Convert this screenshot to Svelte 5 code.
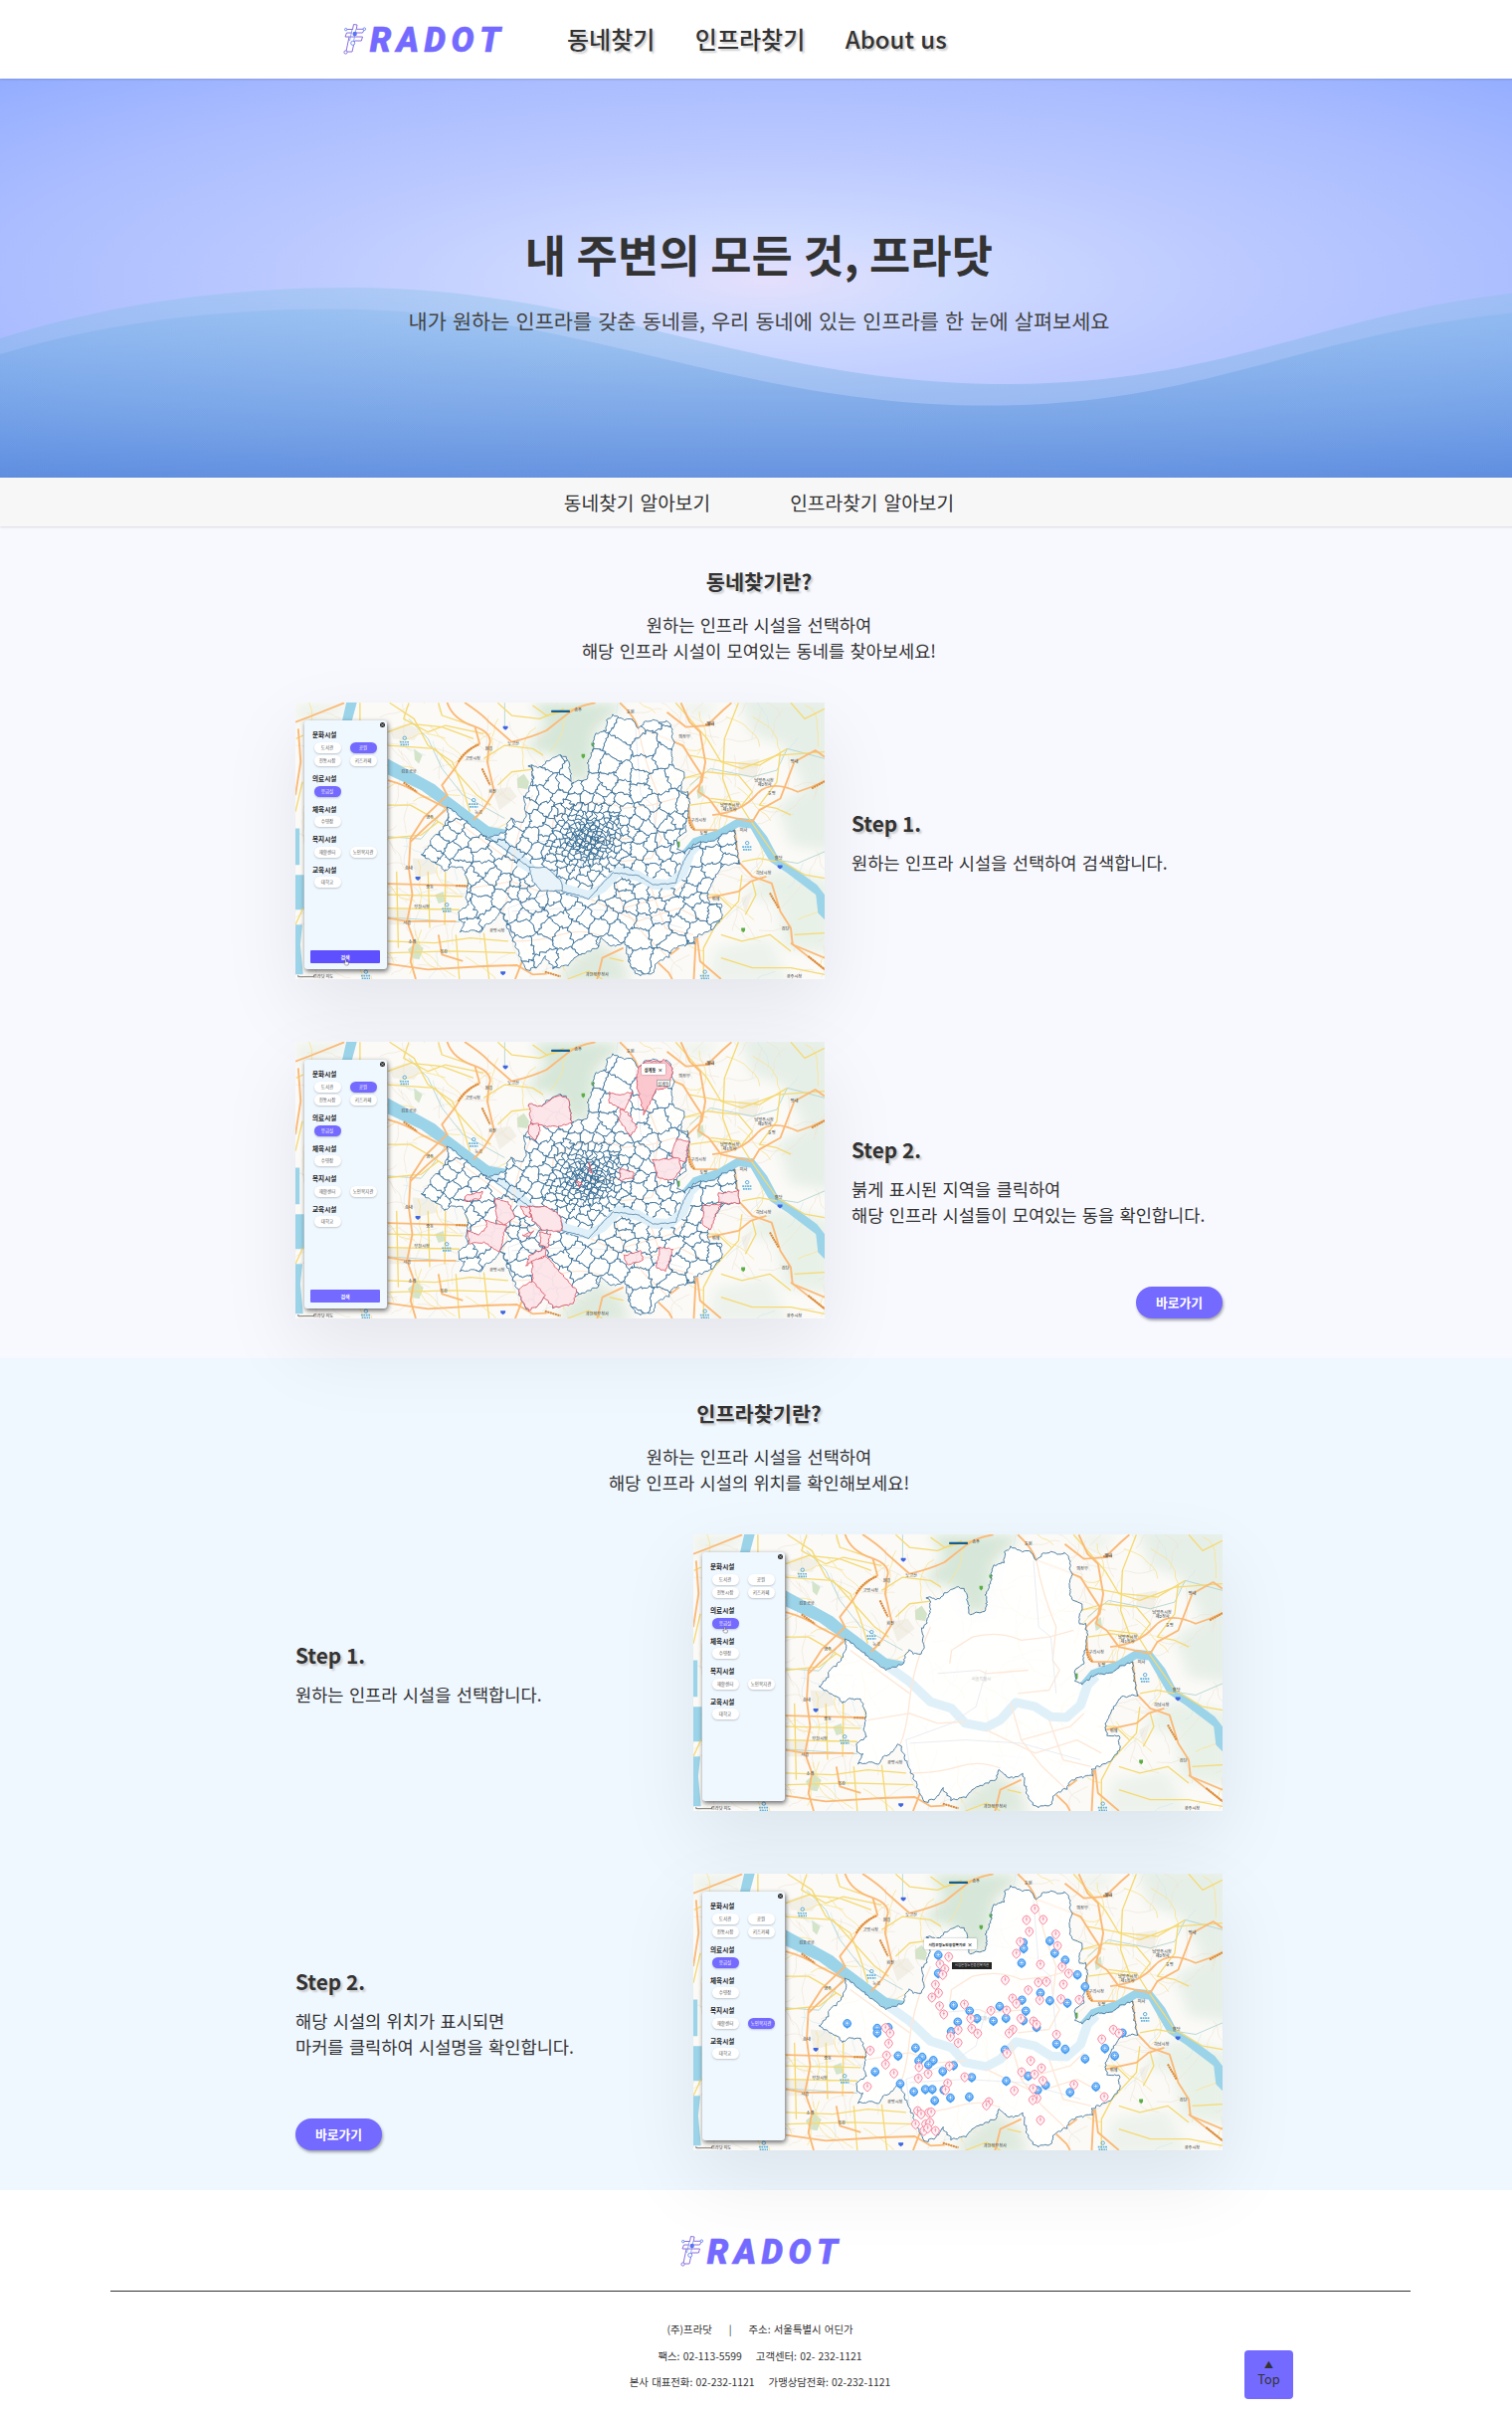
<script>
  // Map drawing units: x 20..1537, y 21..854.
  const seeded = (seed) => () => {
    seed = (seed * 1664525 + 1013904223) % 4294967296;
    return seed / 4294967296;
  };
  const parse = (s) => s.trim().split(/\s+/).map((p) => p.split(',').map(Number));

  // Continuous wobble, so edges shared by two shapes stay together.
  const wobble = ([x, y], a) => [
    x + a * (Math.sin(x * 0.31 + y * 0.17) + 0.8 * Math.sin(y * 0.53 - x * 0.23)),
    y + a * (Math.sin(y * 0.29 - x * 0.19) + 0.8 * Math.sin(x * 0.47 + y * 0.11))
  ];
  function rough(pts, a = 2, close = true) {
    const out = [];
    const n = close ? pts.length : pts.length - 1;
    for (let i = 0; i < n; i++) {
      const p = pts[i];
      const q = pts[(i + 1) % pts.length];
      const k = Math.max(1, Math.round(Math.hypot(q[0] - p[0], q[1] - p[1]) / 6));
      for (let j = 0; j < k; j++) {
        out.push(wobble([p[0] + ((q[0] - p[0]) * j) / k, p[1] + ((q[1] - p[1]) * j) / k], a));
      }
    }
    if (!close) out.push(pts[pts.length - 1]);
    return 'M' + out.map((p) => p[0].toFixed(1) + ',' + p[1].toFixed(1)).join('L') + (close ? 'Z' : '');
  }

  const cityPts = parse(`457,337 572,428 625,410 628,382 640,368 648,381 672,380 680,360 678,330 676,305 690,290 694,270
    699,240 700,222 690,212 728,215 745,195 775,180 795,186 803,200 808,230 812,262 830,258 855,253 862,235 858,205 868,185
    875,140 882,115 912,104 912,75 930,58 950,64 965,72 985,72 1002,98 1025,78 1045,74 1065,80 1085,78 1100,95 1098,120
    1104,140 1098,180 1105,220 1130,225 1136,245 1128,265 1124,288 1145,292 1150,330 1140,380 1138,410 1115,430 1114,465
    1135,472 1160,450 1185,440 1215,440 1245,418 1278,405 1285,460 1292,505 1245,510 1225,540 1200,590 1205,625 1240,630
    1242,665 1215,705 1180,720 1160,730 1165,745 1120,755 1100,765 1090,785 1055,805 1045,835 1005,842 980,815 970,770
    965,740 950,750 925,755 895,733 885,760 850,775 825,785 805,810 760,822 735,785 715,815 685,828 668,800 660,770
    645,740 635,715 612,655 607,655 585,680 560,695 555,712 530,708 492,712 505,682 487,675 490,650 515,630 508,600
    517,565 510,548 500,518 472,514 445,530 440,515 415,505 382,480 405,450 410,430 445,400 457,370`);
  const city = rough(cityPts, 2);

  function cells() {
    const rnd = seeded(77);
    const sites = [];
    const spacing = (x, y) => {
      const d = Math.hypot(x - 860, (y - 430) * 1.1);
      const e = Math.hypot(x - 668, y - 560);
      const f = Math.hypot(x - 930, y - 375);
      const g = Math.hypot((x - 820) * 2, y - 510);
      return Math.min(Math.max(8, d * 0.22), 13 + e * 0.5, 8 + f * 0.6, 11 + g * 0.45, y < 300 ? 78 : y > 680 ? 56 : 44);
    };
    for (let i = 0; i < 30000; i++) {
      const central = i % 3 === 0;
      const x = central ? 780 + rnd() * 190 : 370 + rnd() * 940;
      const y = central ? 340 + rnd() * 200 : 40 + rnd() * 810;
      const s = spacing(x, y) * (0.62 + rnd() * 0.9);
      if (sites.every((p) => Math.hypot(p[0] - x, p[1] - y) > Math.max(s, p[2] * 0.7))) sites.push([x, y, s]);
    }
    const paths = [];
    for (const a of sites) {
      let poly = [[a[0] - 110, a[1] - 110], [a[0] + 110, a[1] - 110], [a[0] + 110, a[1] + 110], [a[0] - 110, a[1] + 110]];
      for (const b of sites) {
        if (a === b || Math.abs(a[0] - b[0]) > 220 || Math.abs(a[1] - b[1]) > 220) continue;
        const mx = (a[0] + b[0]) / 2;
        const my = (a[1] + b[1]) / 2;
        const side = (p) => (p[0] - mx) * (b[0] - a[0]) + (p[1] - my) * (b[1] - a[1]);
        const next = [];
        for (let i = 0; i < poly.length; i++) {
          const p = poly[i];
          const q = poly[(i + 1) % poly.length];
          const sp = side(p);
          const sq = side(q);
          if (sp <= 0) next.push(p);
          if (sp <= 0 !== sq <= 0) {
            const t = sp / (sp - sq);
            next.push([p[0] + (q[0] - p[0]) * t, p[1] + (q[1] - p[1]) * t]);
          }
        }
        poly = next;
      }
      if (poly.length > 2) paths.push(rough(poly, 3));
    }
    return paths.join('');
  }
  const districts = cells();

  function lanes(seed, count, step) {
    const rnd = seeded(seed);
    let d = '';
    for (let i = 0; i < count; i++) {
      let x = 20 + rnd() * 1517;
      let y = 21 + rnd() * 833;
      let a = rnd() * 6.28;
      d += `M${x.toFixed(0)},${y.toFixed(0)}`;
      for (let j = 0; j < 7; j++) {
        a += (rnd() - 0.5) * 0.9;
        x += Math.cos(a) * step;
        y += Math.sin(a) * step;
        d += `L${x.toFixed(0)},${y.toFixed(0)}`;
      }
    }
    return d;
  }
  const paleLanes = lanes(5, 210, 14);
  const yellowLanes = lanes(19, 64, 20);
  const streams = lanes(41, 34, 13);

  const orange = [
    'M455,21 Q470,70 530,92 T575,150 L570,200 590,290 560,340 530,375',
    'M505,21 Q560,60 575,80 L640,140 Q700,125 740,105 L800,55 Q830,30 880,22',
    'M535,95 L548,145 Q500,170 480,215 L440,270 455,300 390,365 350,430 345,520 355,600 340,680 360,740 350,800 365,854',
    'M285,255 Q340,270 380,300 L455,340 400,390 350,440',
    'M950,22 Q990,60 1003,98 L1060,120 1130,150 1160,200 1185,240 1175,290 1205,310 1240,360 1330,380',
    'M1085,50 L1140,95 1200,90 1245,45 1270,22',
    'M1125,22 L1150,80 1180,110 1195,200 1185,260 1145,300 1150,370 1165,405 1230,405',
    'M1215,360 Q1300,350 1340,300 T1460,290 L1500,275 1537,258',
    'M1330,380 L1350,345 1410,310 1450,200 1510,165 1537,185',
    'M1280,405 L1290,500 1330,545 1385,565 1410,650 1440,700 1445,750 1537,790',
    'M1200,610 L1290,590 1325,560 1370,545 M1440,745 L1537,825',
    'M285,567 L480,572 515,575 M285,808 L400,825 560,815 655,812 700,840 740,838',
    'M285,670 L340,680 480,680 M430,720 L440,780 500,800 M1168,730 L1162,854 M1172,730 L1180,800 1240,854',
    'M20,300 L35,200 28,100 M20,80 L70,60 160,22',
    'M1060,805 L1090,835 1100,854 M1120,760 L1095,780 M670,800 L650,854 M885,854 L900,790 960,760'
  ];
  const yellow = [
    'M205,22 L205,75 M285,110 L350,85 440,95 530,130 M285,150 L420,160 480,230 540,300 580,330',
    'M290,22 L360,70 400,150 470,200 500,280 520,350 M285,330 L350,330 400,360 460,400',
    'M345,22 L330,70 400,110 450,90 560,115 M600,22 L640,60 720,70 790,40 M560,190 L620,150 700,160 730,180',
    'M600,270 L640,230 700,222 M285,430 L380,420 430,380 M285,600 L500,605 M285,640 L490,645 M400,530 L405,700 M450,530 L448,690',
    'M310,530 L315,760 M285,740 L420,745 520,730 630,740 M480,720 L490,854 M560,715 L575,854 M290,775 L470,770 650,775',
    'M1110,22 L1200,130 1240,200 1300,220 1400,180 1537,170 M1290,22 L1250,130 1245,250 1280,350',
    'M1150,180 L1250,200 1350,210 1430,160 M1210,310 L1290,320 1320,370 1400,490 1480,540 1537,550',
    'M1130,250 L1200,230 1290,240 1330,290 1300,330 M1150,330 L1220,320 1280,330 M1300,500 L1350,490 1400,500',
    'M1300,540 L1290,620 1220,700 1190,760 1190,854 M1240,720 L1300,740 1380,720 1440,770 M1330,560 L1340,600 1310,660',
    'M1240,790 L1330,820 1440,820 1537,840 M1180,600 L1230,600 1270,640 M1410,170 L1400,260 1350,330 1400,340 1440,360',
    'M20,350 L40,260 M22,130 L42,120 M20,690 L42,640 M800,854 L860,830 900,854 M920,790 L960,800 M1440,22 L1480,70 1537,40',
    'M1537,715 L1450,720 M700,30 L740,60 840,35 M430,22 L440,60 530,92'
  ];
  const inner = [
    'M700,300 Q650,420 640,520 T610,660 M755,410 L760,370 820,330 Q900,310 960,340 L1040,330 1110,310',
    'M1003,98 Q1020,200 1060,300 L1050,400 1070,430 1040,490 950,500 M640,740 Q720,740 780,720 T900,725',
    'M840,430 L860,440 980,430 M520,580 L640,560 720,590 800,585 M930,530 L960,640 1020,720 1090,790',
    'M960,640 L1100,600 1140,560 M1040,580 L1080,700 1160,720 M470,370 L640,500 M860,610 L1000,680 1120,640 1190,680'
  ];

  const redZones = [
    '690,208 728,215 750,195 775,182 803,195 812,265 770,277 712,272 695,262',
    '690,268 718,268 720,290 708,316 688,300',
    '920,172 945,182 985,172 965,225 920,205',
    '950,225 970,232 1000,280 980,305 950,260',
    '1112,315 1148,320 1138,380 1120,378 1098,365',
    '1045,378 1120,370 1125,405 1100,437 1060,432',
    '950,405 990,412 985,430 950,438',
    '1233,478 1290,470 1292,508 1233,505',
    '1190,515 1240,510 1222,545 1210,590 1187,570',
    '505,485 555,472 550,492 505,502',
    '593,495 630,502 650,550 618,572 597,560',
    '565,560 625,575 605,655 560,625 518,628 513,590 545,600 570,580',
    '690,517 740,518 770,535 783,560 782,592 730,588 700,560',
    '665,518 690,517 695,548 680,545',
    '670,605 705,590 690,605',
    '722,593 750,600 745,640 722,630',
    '690,665 740,640 735,665 680,695',
    '698,680 740,668 795,735 828,770 815,810 760,822 730,785 700,750',
    '660,765 700,740 735,785 715,815 690,830 668,800',
    '962,665 1012,650 1015,680 970,692',
    '1065,638 1102,648 1080,710 1055,700',
    '825,438 842,445 833,458',
    '861,385 869,415 865,415'
  ].map((z) => rough(parse(z), 1.6));
  const hotZone = rough(parse('1002,98 1030,78 1065,82 1075,75 1100,95 1098,130 1085,160 1055,165 1040,200 1020,240 1010,200 998,150'), 1.6);

  const bluePins = parse(`1042,227 966,232 967,250 1056,264 1086,285 961,294 722,270 722,325 1121,329 1143,365 1015,384
    1042,407 962,405 1092,414 766,421 898,424 812,438 973,438 833,461 880,468 916,460 778,471 759,500 966,467 1004,487
    1061,537 1086,553 1250,504 1200,551 1228,573 1143,582 461,476 547,490 547,504 579,488 657,549 607,573 676,577 666,588
    708,587 694,600 766,602 735,620 541,621 818,638 613,657 652,681 685,674 705,674 738,676 712,708 757,700 811,697
    917,649 980,634 1030,661 1007,677 1100,683 1174,666 913,555`);
  const pinkPins = parse(`999,130 975,163 1023,162 983,198 1059,206 957,229 1064,241 946,264 1015,297 1077,304 1096,324
    752,274 727,296 741,311 735,328 714,358 723,383 704,396 914,344 1009,351 1032,349 1081,357 980,374 935,399 1013,404
    1074,401 946,415 1126,403 797,417 726,422 738,447 873,436 918,435 815,460 959,460 995,468 1004,478 818,490 779,494
    835,505 757,514 779,533 936,493 925,504 1061,508 1224,493 1240,504 1191,522 919,565 571,488 584,504 580,535 527,556
    574,571 571,598 595,625 519,665 667,606 665,640 693,626 754,603 798,636 749,655 743,675 987,587 1018,609 961,621
    998,628 1022,647 994,671 940,677 1005,700 993,705 1111,659 1198,696 867,711 860,721 1015,766 663,738 673,748 695,743
    702,742 657,778 686,778 698,773 681,798 714,798 692,790`);

  const labels = [
    [528, 195, '고양시청'], [382, 642, '부천시청'], [598, 713, '광명시청'], [1175, 382, '구리시청'],
    [1363, 260, '남양주시청'], [1365, 273, '제2청사'], [1265, 336, '남양주시청'], [1265, 349, '제1청사'],
    [1362, 540, '하남시청'], [885, 846, '과천정부청사'], [1450, 852, '광주시청'], [345, 235, '김포공항'],
    [645, 150, '노고산'], [575, 165, '원흥'], [1135, 128, '의정부'], [1450, 205, '평내'], [405, 372, '행주'],
    [545, 356, '능곡'], [585, 295, '화전'], [345, 525, '송내'], [405, 580, '중동'], [340, 690, '시흥'],
    [355, 745, '소래'], [445, 775, '목감'], [1225, 618, '위례'], [1425, 708, '검단'], [1405, 495, '팔당'],
    [1385, 300, '호평'], [1210, 90, '별내'], [980, 55, '호원'], [830, 48, '송추'], [1190, 420, '토평'], [1305, 412, '미사']
  ];
  const blueMarks = [[333, 128], [531, 315], [454, 630], [1315, 444], [1194, 832], [222, 832]];

  const groups = [
    ['문화시설', ['도서관', '공원', '전통시장', '키즈카페']],
    ['의료시설', ['응급실']],
    ['체육시설', ['수영장']],
    ['복지시설', ['재활센터', '노인복지관']],
    ['교육시설', ['대학교']]
  ];
  const active = {
    search: ['공원', '응급실'],
    result: ['공원', '응급실'],
    select: ['응급실'],
    pins: ['응급실', '노인복지관']
  };
</script>

{#snippet logo()}
  <svg class="logo" viewBox="0 0 160 32" role="img" aria-label="FRADOT">
    <g fill="none" stroke="#8d6fdc" stroke-width="1">
      <path d="M8.500 6.500 9.500 1.500 13 2 12.300 6.300H19.500M20 7 18.500 10H11.500M2 6.500H9M8 10H2.500L1 14H18.500L17.300 18H10.500L8 29H2.500M5 14 2 28.500" />
      <path d="M8 6.500 5.500 18M12 6 9.500 18.500" stroke="#7b93ee" stroke-width=".8" />
      <circle cx="1.500" cy="29.500" r="1.600" fill="#fff" />
      <circle cx="8.700" cy="20.300" r="2" fill="#fff" stroke="#6f8df5" />
      <circle cx="20.300" cy="6.200" r="1.300" fill="#fff" stroke="#6f8df5" />
      <circle cx="1.700" cy="6.600" r="1.200" fill="#fff" stroke="#6f8df5" />
      <circle cx="10.700" cy="11" r="2.200" fill="#5b72f4" stroke="none" />
    </g>
    <text x="25.800 52.500 80.500 107.500 136" y="28.800">RADOT</text>
  </svg>
{/snippet}

{#snippet map(kind)}
  <div class="map">
    <svg class="canvas" viewBox="20 21 1517 833" preserveAspectRatio="none">
      <defs>
        <clipPath id="city-{kind}"><path d={city} /></clipPath>
        <filter id="soft-{kind}"><feGaussianBlur stdDeviation="18" /></filter>
      </defs>
      <rect x="20" y="21" width="1517" height="833" fill="#fbfaf7" />
      <g filter="url(#soft-{kind})">
        <path d="M1290,0H1560V470L1440,450 1400,330 1480,280 1420,150 1330,120Z" fill="#e6efe7" />
        <path d="M1300,600 1400,620 1420,760 1560,780V560L1440,530 1400,520Z" fill="#e8f1e8" />
        <path d="M700,21H960L880,110 860,260 800,250 770,180 680,160 740,90Z" fill="#d6e7d9" />
        <path d="M780,830 880,740 960,790 980,870H780Z" fill="#dfeadf" />
        <path d="M1220,760 1380,730 1440,870H1200Z" fill="#edf3ec" />
        <path d="M20,21H180L150,60 20,90ZM1100,21H1240L1180,80Z" fill="#eef3ec" />
      </g>
      <path d="M655,250l20-14 15 24-5 22-28-4zM342,765l25-22 20 18-12 34-20-4zM1170,285l18-15 4 30-18 12zM360,160l24 20-10 25-12-12zM420,600l24-10 6 30-20 6z" fill="#d3e4c8" />
      <path d="M290,100l50-15 40 20-20 30-60-5zM585,285l50-10 20 30-50 40zM355,490l60 5 10 40-60 15zM290,640h60v50h-60zM1290,200l60-10-10 60-50-10zM1330,590l-20 70-12-50z" fill="#f2efe6" />
      <path class="pale" d={paleLanes} />
      <path class="stream" d={streams} />
      <path class="thin" d={yellowLanes} />
      <path d="M166,21h30l-14,55h-28zM20,400h12v110h-12zM20,540h24v105h-24zM20,690h20l-6,60 8,90h-22z" fill="#9bd3e9" />
      <path d="M285,190 340,222 420,268 460,304 575,395 628,405 625,412 572,428 460,345 380,285 285,238Z" fill="#9bd3e9" />
      <path d="M1120,480 1160,430 1235,402 1290,368 1332,372 1372,425 1405,490 1450,520 1515,570 1537,600V675L1518,655 1512,600 1430,535 1380,500 1325,400 1290,396 1230,435 1165,455Z" fill="#9bd3e9" />
      <g class="waterway">
        <path d="M285,425 380,432 410,395 440,350 460,320M345,70 400,130 440,220 500,300 620,370M620,22V95M1150,270 1210,220 1330,245 1400,225 1430,160 1537,190M1400,495 1460,505 1537,470M285,668 490,682" />
      </g>
      {#each yellow as d}<path class="yellow" {d} />{/each}
      {#each orange as d}<path class="orange" {d} />{/each}
      <path class="brown" d="M487,200Q505,165 545,148M330,262 368,290M555,220 578,270M1148,365Q1148,395 1165,405M1380,595 1405,640M1490,785 1537,825M480,573 515,573M1500,280 1537,258M735,832 780,846M1195,88 1220,86" />
      {#each labels as [x, y, name]}<text class="place" {x} {y}>{name}</text>{/each}
      {#each blueMarks as [x, y]}
        <circle cx={x} cy={y} r="5" fill="none" stroke="#4aa3d6" stroke-width="2.500" />
        <path d="M{x - 14},{y + 12}h28M{x - 12},{y + 20}h24" stroke="#62b2dd" stroke-width="5" stroke-dasharray="5 2" />
      {/each}
      <path d="M615,92h14v6l-7,6-7-6zM364,545h14v6l-7,6-7-6zM1402,511h14v6l-7,6-7-6zM608,831h14v6l-7,6-7-6z" fill="#3f66e0" />
      <path d="M868,142h10v8l-5,6-5-6zM840,176h10v8l-5,6-5-6zM1298,700h11v8l-5,6-6-6zM1114,440h8v14l-4,5z" fill="#5cad45" />

      <path d={city} fill="#fff" fill-opacity=".84" />
      <g clip-path="url(#city-{kind})">
        <path class="river" d="M560,405 640,465 700,525 760,545 800,590 860,602 900,580 945,527 1000,540 1045,570 1090,572 1130,535 1150,475 1175,448" />
        {#each inner as d}<path class="inner" {d} />{/each}
        <path class="rail" d="M995,100 1010,300 1045,330 1060,500M640,720 630,640 760,590 830,540 860,430M720,440 840,430M640,650 800,640 960,650 1130,700" />
        {#if kind === 'search' || kind === 'result'}
          <path class="district" d={districts} />
          <path d="M690,517 740,518 783,560 785,588 725,588 700,560Z" fill="#e9f3fa" />
          <path class="river" d="M660,500 700,525 M790,580 860,602 900,580 945,530 1000,545 1045,565 1090,568 1130,535 1150,480" />
          <path class="district" d={rough(parse('575,428 640,480 690,517 740,518 783,560 785,588 860,612 930,533 1000,542 1045,570 1110,565 1132,500 1152,465'), 1, false)} />
          <path class="district" d={rough(parse('690,517 700,560 725,588 785,588'), 1, false)} />
        {:else}
          <text class="place faint" x="845" y="462">서울특별시</text>
        {/if}
      </g>
      <path class="border" d={city} />
      {#if kind === 'result'}
        {#each redZones as d}<path class="zone" {d} />{/each}
        <path class="zone hot" d={hotZone} />
      {/if}
      {#if kind === 'pins'}
        {#each bluePins as [x, y]}
          <path d="M{x},{y + 12}l-9,-7a12,13 0 1 1 18,0z" fill="#459cf3" />
          <circle cx={x} cy={y - 5} r="7.500" fill="#4c9ff2" stroke="#d6eaff" stroke-width="1.500" />
          <path d="M{x - 5},{y - 5}h10M{x},{y - 10}v10" stroke="#fff" stroke-width="2.200" />
        {/each}
        {#each pinkPins as [x, y]}
          <path d="M{x},{y + 12}l-8,-7a11,12 0 1 1 16,0z" fill="#fff3f5" stroke="#f57c98" stroke-width="2.600" />
          <path d="M{x},{y - 12}v13M{x - 3},{y - 5}h6" stroke="#f0829b" stroke-width="2" />
        {/each}
      {/if}
      <rect x="753" y="44" width="54" height="7" rx="2" fill="#155e91" />
      <path d="M28,842v5h45v-5" fill="none" stroke="#444" stroke-width="2" />
      <text class="place" x="100" y="850">프라닷 지도</text>
    </svg>

    <aside class="panel">
      <span class="close">×</span>
      {#each groups as [title, items]}
        <div class="group">
          <b>{title}</b>
          <div class="chips">
            {#each items as item}
              <span class="chip" class:on={active[kind].includes(item)}>{item}</span>
            {/each}
          </div>
        </div>
      {/each}
      {#if kind === 'search' || kind === 'result'}
        <span class="find" class:pressed={kind === 'search'}>검색</span>
      {/if}
    </aside>

    {#if kind === 'search' || kind === 'select'}
      <svg class="hand {kind}" viewBox="0 0 12 14"><path d="M4 1.500q1-1 2 0V6l4 1q1.300.500 1 2l-1 4H4.500L1 8.500q.500-1.300 1.800-.700L4 9z" fill="#fff" stroke="#555" /></svg>
    {/if}
    {#if kind === 'result'}
      <span class="bubble dong">상계동 <i>×</i></span>
      <span class="tip light">상계동</span>
    {/if}
    {#if kind === 'pins'}
      <span class="bubble center">시립은평노인종합복지관 <i>×</i></span>
      <span class="tip dark">시립은평노인종합복지관</span>
    {/if}
  </div>
{/snippet}

<div class="page">
  <header>
    {@render logo()}
    <nav><a href="#find">동네찾기</a><a href="#infra">인프라찾기</a><a href="#about">About us</a></nav>
  </header>

  <div class="hero">
    <svg class="waves" viewBox="0 0 1526 401" preserveAspectRatio="none">
      <defs>
        <linearGradient id="back" x1="0" y1="0" x2="0" y2="1">
          <stop offset="0" stop-color="#84c0e4" stop-opacity=".34" />
          <stop offset="1" stop-color="#5a96d7" stop-opacity=".42" />
        </linearGradient>
        <linearGradient id="front" x1="0" y1="0" x2="0" y2="1">
          <stop offset="0" stop-color="#70b2e6" stop-opacity=".24" />
          <stop offset="1" stop-color="#3770cd" stop-opacity=".42" />
        </linearGradient>
      </defs>
      <path fill="url(#back)" d="M0,261C120,223 240,210 354,210C600,210 760,307 1013,307C1230,307 1330,236 1526,215V401H0Z" />
      <path fill="url(#front)" d="M0,277C110,244 220,231.600 334,231.600C580,231.600 740,328.600 994,328.600C1210,328.600 1310,256 1526,235V401H0Z" />
    </svg>
    <h1>내 주변의 모든 것, 프라닷</h1>
    <p>내가 원하는 인프라를 갖춘 동네를, 우리 동네에 있는 인프라를 한 눈에 살펴보세요</p>
  </div>

  <div class="subnav"><a href="#find">동네찾기 알아보기</a><a href="#infra">인프라찾기 알아보기</a></div>

  <section class="find-area" id="find">
    <h2>동네찾기란?</h2>
    <p class="lead">원하는 인프라 시설을 선택하여<br />해당 인프라 시설이 모여있는 동네를 찾아보세요!</p>
    <div class="row">
      {@render map('search')}
      <div class="step first"><h3>Step 1.</h3><p>원하는 인프라 시설을 선택하여 검색합니다.</p></div>
    </div>
    <div class="row">
      {@render map('result')}
      <div class="step">
        <h3>Step 2.</h3>
        <p>붉게 표시된 지역을 클릭하여<br />해당 인프라 시설들이 모여있는 동을 확인합니다.</p>
        <button>바로가기</button>
      </div>
    </div>
  </section>

  <section class="infra-area" id="infra">
    <h2>인프라찾기란?</h2>
    <p class="lead">원하는 인프라 시설을 선택하여<br />해당 인프라 시설의 위치를 확인해보세요!</p>
    <div class="row flip">
      {@render map('select')}
      <div class="step first"><h3>Step 1.</h3><p>원하는 인프라 시설을 선택합니다.</p></div>
    </div>
    <div class="row flip">
      {@render map('pins')}
      <div class="step">
        <h3>Step 2.</h3>
        <p>해당 시설의 위치가 표시되면<br />마커를 클릭하여 시설명을 확인합니다.</p>
        <button>바로가기</button>
      </div>
    </div>
  </section>

  <footer>
    {@render logo()}
    <hr />
    <div class="info"><span>(주)프라닷</span><span class="bar">|</span><span>주소: 서울특별시 어딘가</span></div>
    <div class="info"><span>팩스: 02-113-5599</span><span>고객센터: 02- 232-1121</span></div>
    <div class="info"><span>본사 대표전화: 02-232-1121</span><span>가맹상담전화: 02-232-1121</span></div>
  </footer>
  <a class="top" href="#app"><span>▲</span>Top</a>
</div>

<style>
  :global(body) { overflow-x: hidden; }
  .page {
    position: relative;
    width: 1526px;
    height: 2426px;
    overflow: hidden;
    color: #333;
    background: #fff;
    font-family: 'Noto Sans CJK KR', 'Noto Sans', sans-serif;
  }
  .page * { box-sizing: border-box; }
  h1, h2, h3, p { margin: 0; }
  a { color: inherit; text-decoration: none; }

  header {
    position: relative;
    z-index: 2;
    display: flex;
    align-items: center;
    height: 79px;
    padding: 0 0 2px 346px;
    background: #fff;
    box-shadow: 0 1px 2px rgba(60, 70, 120, .25);
  }
  .logo { display: block; width: 160px; height: 32px; overflow: visible; }
  .logo text {
    font: italic 900 34.300px Roboto, sans-serif;
    fill: #746aff;
    stroke: #746aff;
    stroke-width: .5;
  }
  nav {
    display: flex;
    gap: 40.500px;
    margin-left: 64px;
    font-size: 24px;
    font-weight: 500;
    line-height: 35px;
    word-spacing: 1px;
    text-shadow: 2px 2px 2px #ccc;
  }

  .hero {
    position: relative;
    height: 401px;
    padding-top: 143px;
    text-align: center;
    background: radial-gradient(ellipse at 50.5% 50.5%, #e4dffc 0, #d0dbff 16%, #bccaff 42%, #abbdff 72%, #93adff 100%);
  }
  .waves { position: absolute; inset: 0; width: 100%; height: 100%; }
  .hero h1 { position: relative; font-size: 44.8px; line-height: 65px; font-weight: 700; letter-spacing: .2px; }
  .hero p { position: relative; margin-top: 20px; font-size: 20.8px; line-height: 30px; word-spacing: 1.500px; color: #444; }

  .subnav {
    position: relative;
    display: flex;
    justify-content: center;
    gap: 80px;
    height: 49px;
    padding-top: 11px;
    font-size: 19.2px;
    line-height: 28px;
    word-spacing: 1.800px;
    background: #f7f7f7;
    box-shadow: 0 1px 2px rgba(0, 0, 0, .12);
  }

  section { height: 836px; padding: 40px 297px 0; }
  .find-area { background: #f8f9ff; }
  .infra-area { background: #eff7ff; }
  h2 {
    font-size: 20.8px;
    line-height: 30px;
    text-align: center;
    text-shadow: 2px 2px 2px #ccc;
  }
  .lead { margin: 16px 0 39px; text-align: center; }
  .lead, .step p { font-size: 17.6px; line-height: 26px; word-spacing: 1.400px; }
  .row { display: flex; gap: 27px; height: 278px; margin-bottom: 63px; }
  .flip { flex-direction: row-reverse; }
  .step { flex: 1; display: flex; flex-direction: column; padding-top: 93px; }
  .step.first { padding-top: 106px; }
  h3 { font-size: 20.8px; line-height: 30px; text-shadow: 2px 2px 2px #ccc; }
  .step p { margin-top: 11.500px; white-space: nowrap; }
  button {
    align-self: flex-end;
    width: 87px;
    height: 32px;
    margin-top: auto;
    padding: 0;
    border: 0;
    border-radius: 16px;
    color: #fff;
    background: #746aff;
    box-shadow: 1px 2px 3px rgba(0, 0, 0, .35);
    font: 700 12.8px/32px 'Noto Sans CJK KR', sans-serif;
  }
  .flip button { align-self: flex-start; }

  .map {
    position: relative;
    flex: none;
    width: 532px;
    height: 278px;
    box-shadow: 0 30px 75px rgba(0, 0, 0, .08);
  }
  .canvas { display: block; width: 100%; height: 100%; }
  .canvas path { stroke-linejoin: round; }
  .pale, .stream, .thin, .yellow, .orange, .brown, .inner, .rail, .river, .district, .waterway { fill: none; }
  .pale { stroke: #ece2d0; stroke-width: 1.600; }
  .stream { stroke: #cfe6ef; stroke-width: 1.600; }
  .thin { stroke: #f8e497; stroke-width: 2.600; }
  .yellow { stroke: #f5d971; stroke-width: 3.800; }
  .orange { stroke: #fbb976; stroke-width: 5.400; }
  .brown { stroke: #d98a3a; stroke-width: 6; stroke-dasharray: 6 1.500; }
  .waterway { stroke: #a5cdc9; stroke-width: 2.200; }
  .inner { stroke: #fde8d8; stroke-width: 4; }
  .rail { stroke: #e6e9ef; stroke-width: 2.500; }
  .river { stroke: #e0f0f9; stroke-width: 27; }
  .district { stroke: #356c95; stroke-width: 2; }
  .border { fill: none; stroke: #3d7299; stroke-width: 2.600; }
  .zone { fill: #fde5e9; fill-opacity: .95; stroke: #dd5566; stroke-width: 2.600; }
  .hot { fill: #fbc5cc; }
  .place {
    font: 500 12px 'Noto Sans CJK KR', sans-serif;
    text-anchor: middle;
    fill: #555;
  }
  .faint { fill: #ccc; }

  .panel {
    position: absolute;
    top: 18px;
    left: 9px;
    width: 83px;
    height: 250px;
    padding: 8px 0 0 8px;
    border-radius: 3px;
    background: #eff7ff;
    box-shadow: 1px 2px 5px rgba(0, 0, 0, .6);
  }
  .group { margin-bottom: 6px; }
  .group b { display: block; margin-bottom: 1.500px; color: #222; font-size: 6.600px; line-height: 12px; }
  .chips { display: grid; grid-template-columns: 27px 27px; gap: 2.800px 9px; padding-left: 1.500px; }
  .chip {
    height: 11px;
    border-radius: 6px;
    background: #fff;
    box-shadow: 0 1px 2px rgba(0, 0, 0, .2);
    color: #555;
    font-size: 4.500px;
    line-height: 11px;
    text-align: center;
    white-space: nowrap;
  }
  .chip.on { background: #746aff; color: #fff; }
  .find {
    position: absolute;
    left: 6px;
    bottom: 6px;
    width: 70px;
    height: 13px;
    border-radius: 1px;
    background: #746aff;
    color: #fff;
    font-size: 5px;
    font-weight: 700;
    line-height: 13px;
    text-align: center;
  }
  .pressed { background: #5f50ff; }
  .close {
    position: absolute;
    top: 2px;
    right: 2px;
    width: 5px;
    height: 5px;
    border-radius: 50%;
    background: #222;
    color: #fff;
    font-size: 5px;
    line-height: 4.500px;
    text-align: center;
  }
  .hand { position: absolute; width: 6px; height: 8px; }
  .hand.search { left: 48px; top: 257px; }
  .hand.select { left: 29px; top: 92px; }
  .bubble, .tip { position: absolute; white-space: nowrap; text-align: center; }
  .bubble {
    height: 11px;
    border-radius: 1px;
    background: #fff;
    box-shadow: 0 0 2px rgba(0, 0, 0, .4);
    color: #222;
    font-size: 4.200px;
    font-weight: 700;
    line-height: 11px;
  }
  .bubble i { margin-left: 1px; font-style: normal; font-size: 5px; }
  .dong { left: 348px; top: 22px; width: 24px; }
  .center { left: 232px; top: 65px; width: 53px; font-size: 3.700px; }
  .tip { height: 7px; font-size: 4.200px; line-height: 6.500px; }
  .light { left: 363px; top: 38px; width: 14px; background: #fff; border: .5px solid #aaa; }
  .dark { left: 260px; top: 89px; width: 40px; background: #252525; color: #ddd; font-size: 3.400px; }

  footer { display: flex; flex-direction: column; align-items: center; padding-top: 45px; }
  footer .logo { margin-left: 4px; }
  hr { width: 1307px; height: 1px; margin: 24px 0 30px 3px; border: 0; background: #333; }
  .info { display: flex; gap: 14px; margin: 0 0 10.700px 2px; font-size: 10.400px; line-height: 16px; word-spacing: .9px; }
  .info .bar { margin: 0 3px; }
  .top {
    position: absolute;
    left: 1251px;
    top: 2362px;
    width: 49px;
    height: 49px;
    padding-top: 8px;
    border-radius: 4px;
    background: #746aff;
    font-size: 12.800px;
    line-height: 16px;
    text-align: center;
  }
  .top span { display: block; font-size: 9px; line-height: 13px; }
</style>
